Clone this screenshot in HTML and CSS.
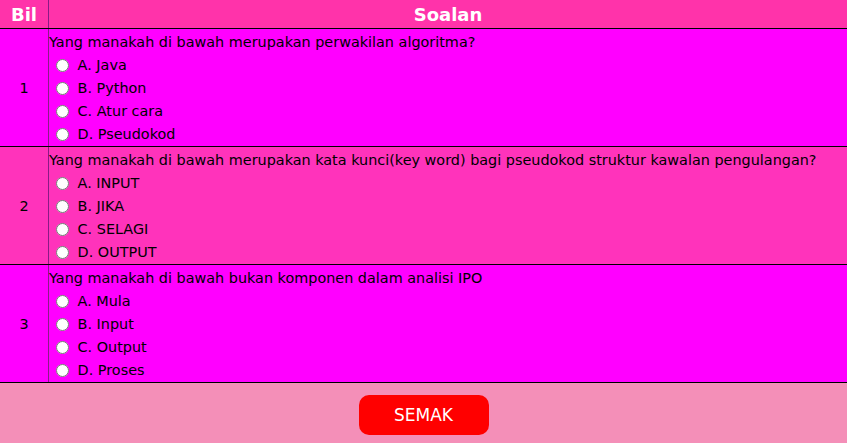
FILE: index.html
```html
<!DOCTYPE html>
<html lang="ms">
<head>
  <meta charset="UTF-8" />
  <title>Kuiz Algoritma</title>
  <link rel="stylesheet" href="styles.css">
</head>
<body>

  <form class="kuiz">
    <table class="soalan-table">
      <thead>
        <tr>
          <th class="bil">Bil</th>
          <th>Soalan</th>
        </tr>
      </thead>
      <tbody>
        <tr class="ganjil">
          <td class="bil">1</td>
          <td>
            <div class="soalan">Yang manakah di bawah merupakan perwakilan algoritma?</div>
            <label class="pilihan"><input type="radio" name="s1"> A. Java</label>
            <label class="pilihan"><input type="radio" name="s1"> B. Python</label>
            <label class="pilihan"><input type="radio" name="s1"> C. Atur cara</label>
            <label class="pilihan"><input type="radio" name="s1"> D. Pseudokod</label>
          </td>
        </tr>
        <tr class="genap">
          <td class="bil">2</td>
          <td>
            <div class="soalan">Yang manakah di bawah merupakan kata kunci(key word) bagi pseudokod struktur kawalan pengulangan?</div>
            <label class="pilihan"><input type="radio" name="s2"> A. INPUT</label>
            <label class="pilihan"><input type="radio" name="s2"> B. JIKA</label>
            <label class="pilihan"><input type="radio" name="s2"> C. SELAGI</label>
            <label class="pilihan"><input type="radio" name="s2"> D. OUTPUT</label>
          </td>
        </tr>
        <tr class="ganjil">
          <td class="bil">3</td>
          <td>
            <div class="soalan">Yang manakah di bawah bukan komponen dalam analisi IPO</div>
            <label class="pilihan"><input type="radio" name="s3"> A. Mula</label>
            <label class="pilihan"><input type="radio" name="s3"> B. Input</label>
            <label class="pilihan"><input type="radio" name="s3"> C. Output</label>
            <label class="pilihan"><input type="radio" name="s3"> D. Proses</label>
          </td>
        </tr>
      </tbody>
    </table>

    <div class="butang">
      <button type="button" class="semak">SEMAK</button>
    </div>
  </form>

</body>
</html>
```

FILE: styles.css
```css
html, body {
  margin: 0; padding: 0;
  font-family: "Comic Sans MS", "DejaVu Sans", sans-serif;
  background: #f48fb8;
}
.soalan-table {
  width: 100%;
  border-collapse: collapse;
  font-size: 14.4px;
  color: #000;
}
.soalan-table th {
  height: 28px;
  padding: 0;
  background: #ff33aa;
  color: white;
  font-size: 18px;
  font-weight: bold;
  text-align: center;
  border-bottom: 1px solid #000;
}
.soalan-table th.bil,
.soalan-table td.bil {
  width: 48px;
  border-right: 1px solid #8a1a86;
}
.soalan-table td {
  padding: 1px 0;
  text-align: left;
  vertical-align: middle;
  border-bottom: 1px solid #000;
}
.soalan-table td.bil {
  text-align: center;
}
.ganjil { background: #ff00ff; }
.genap { background: #ff33bb; }
.soalan,
.pilihan {
  display: block;
  height: 21px;
  padding-top: 2px;
  line-height: 21px;
  white-space: nowrap;
}
.pilihan input {
  margin: 0 4px 0 7px;
  vertical-align: -2px;
}
.butang {
  display: flex;
  justify-content: center;
  padding-top: 12px;
}
.semak {
  width: 130px;
  height: 40px;
  background: #ff0000;
  color: white;
  border: none;
  border-radius: 10px;
  font-family: inherit;
  font-size: 17px;
  cursor: pointer;
}
```
